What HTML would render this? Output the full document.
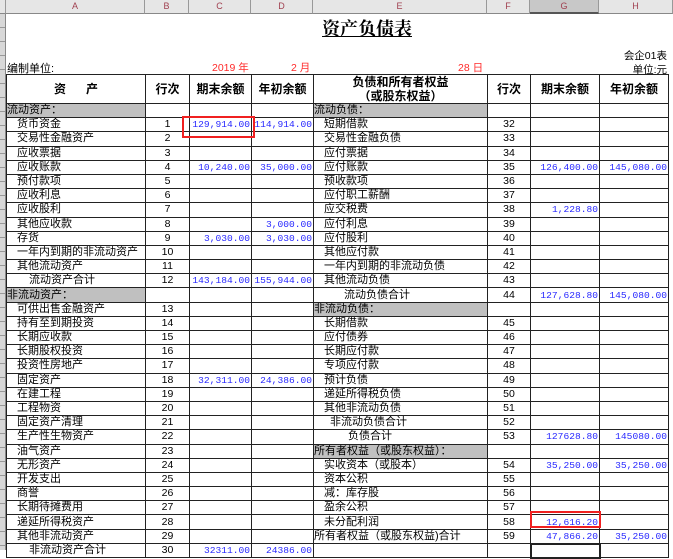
<!DOCTYPE html>
<html><head><meta charset="utf-8">
<style>
*{margin:0;padding:0;box-sizing:border-box}
body{width:673px;height:550px;overflow:hidden;background:#fff;position:relative;font-family:"Liberation Sans","Noto Sans CJK SC",sans-serif;font-size:11px;color:#000}
.ch{position:absolute;top:0;height:14px;background:#e6e6e6;border-right:1px solid #999;border-bottom:1px solid #888;color:#a04050;font-size:9px;text-align:center;line-height:13px;font-family:"Liberation Sans",sans-serif}
.gut{position:absolute;left:0;top:14px;width:6px;height:536px;background:#d8d8d8;border-right:1px solid #888;
 background-image:repeating-linear-gradient(to bottom,transparent 0,transparent 13px,#999 13px,#999 14px)}
.abs{position:absolute;white-space:nowrap}
.red{color:#ff2a2a}
table{position:absolute;left:6px;top:74px;border-collapse:collapse;table-layout:fixed;width:662px}
td{border:1px solid #222;height:14.2px;padding:0;line-height:13px;white-space:nowrap;overflow:hidden;font-size:11px}
tr.h td{height:29px;text-align:center;font-size:12px;font-weight:bold;line-height:14px}
td.n{text-align:center;font-family:"Liberation Sans",sans-serif;font-size:10.5px}
td.v{text-align:right;color:#2828ff;font-family:"Liberation Mono",monospace;font-size:9.6px;padding-right:1px}
td.g{background:#c0c0c0}
.i1{padding-left:10px}.i2{padding-left:22px}.i3{padding-left:16px}.i4{padding-left:30px}
.box{position:absolute;border:2px solid #f02020}
</style></head><body>
<div class="ch" style="left:0;width:6px"></div>
<div class="ch" style="left:6px;width:139px">A</div>
<div class="ch" style="left:145px;width:44px">B</div>
<div class="ch" style="left:189px;width:62px">C</div>
<div class="ch" style="left:251px;width:62px">D</div>
<div class="ch" style="left:313px;width:174px">E</div>
<div class="ch" style="left:487px;width:43px">F</div>
<div class="ch" style="left:530px;width:69px;background:#c8c8c8;border-bottom:2px solid #555">G</div>
<div class="ch" style="left:599px;width:74px">H</div>
<div class="gut"></div>

<div class="abs" style="left:322px;top:15px;font-size:18px;font-family:'Liberation Serif','Noto Serif CJK SC',serif;font-weight:bold;text-decoration:underline;letter-spacing:0px">资产负债表</div>
<div class="abs" style="right:6px;top:48px;font-size:10.5px">会企01表</div>
<div class="abs" style="right:6px;top:62px;font-size:10.5px">单位:元</div>
<div class="abs" style="left:7px;top:60px;font-size:11px">编制单位:</div>
<div class="abs red" style="left:212px;top:60px;font-size:10.5px">2019 年</div>
<div class="abs red" style="left:291px;top:60px;font-size:10.5px">2 月</div>
<div class="abs red" style="left:458px;top:60px;font-size:10.5px">28 日</div>

<table>
<colgroup><col style="width:139px"><col style="width:44px"><col style="width:62px"><col style="width:62px"><col style="width:174px"><col style="width:43px"><col style="width:69px"><col style="width:69px"></colgroup>
<tr class="h"><td>资&nbsp;&nbsp;&nbsp;&nbsp;&nbsp;&nbsp;产</td><td>行次</td><td>期末余额</td><td>年初余额</td><td>负债和所有者权益<br>（或股东权益）</td><td>行次</td><td>期末余额</td><td>年初余额</td></tr>
<tr><td class="g">流动资产：</td><td></td><td></td><td></td><td class="g">流动负债：</td><td></td><td></td><td></td></tr>
<tr><td class="i1">货币资金</td><td class="n">1</td><td class="v">129,914.00</td><td class="v">114,914.00</td><td class="i1">短期借款</td><td class="n">32</td><td></td><td></td></tr>
<tr><td class="i1">交易性金融资产</td><td class="n">2</td><td></td><td></td><td class="i1">交易性金融负债</td><td class="n">33</td><td></td><td></td></tr>
<tr><td class="i1">应收票据</td><td class="n">3</td><td></td><td></td><td class="i1">应付票据</td><td class="n">34</td><td></td><td></td></tr>
<tr><td class="i1">应收账款</td><td class="n">4</td><td class="v">10,240.00</td><td class="v">35,000.00</td><td class="i1">应付账款</td><td class="n">35</td><td class="v">126,400.00</td><td class="v">145,080.00</td></tr>
<tr><td class="i1">预付款项</td><td class="n">5</td><td></td><td></td><td class="i1">预收款项</td><td class="n">36</td><td></td><td></td></tr>
<tr><td class="i1">应收利息</td><td class="n">6</td><td></td><td></td><td class="i1">应付职工薪酬</td><td class="n">37</td><td></td><td></td></tr>
<tr><td class="i1">应收股利</td><td class="n">7</td><td></td><td></td><td class="i1">应交税费</td><td class="n">38</td><td class="v">1,228.80</td><td></td></tr>
<tr><td class="i1">其他应收款</td><td class="n">8</td><td></td><td class="v">3,000.00</td><td class="i1">应付利息</td><td class="n">39</td><td></td><td></td></tr>
<tr><td class="i1">存货</td><td class="n">9</td><td class="v">3,030.00</td><td class="v">3,030.00</td><td class="i1">应付股利</td><td class="n">40</td><td></td><td></td></tr>
<tr><td class="i1">一年内到期的非流动资产</td><td class="n">10</td><td></td><td></td><td class="i1">其他应付款</td><td class="n">41</td><td></td><td></td></tr>
<tr><td class="i1">其他流动资产</td><td class="n">11</td><td></td><td></td><td class="i1">一年内到期的非流动负债</td><td class="n">42</td><td></td><td></td></tr>
<tr><td class="i2">流动资产合计</td><td class="n">12</td><td class="v">143,184.00</td><td class="v">155,944.00</td><td class="i1">其他流动负债</td><td class="n">43</td><td></td><td></td></tr>
<tr><td class="g">非流动资产：</td><td></td><td></td><td></td><td class="i4">流动负债合计</td><td class="n">44</td><td class="v">127,628.80</td><td class="v">145,080.00</td></tr>
<tr><td class="i1">可供出售金融资产</td><td class="n">13</td><td></td><td></td><td class="g">非流动负债：</td><td></td><td></td><td></td></tr>
<tr><td class="i1">持有至到期投资</td><td class="n">14</td><td></td><td></td><td class="i1">长期借款</td><td class="n">45</td><td></td><td></td></tr>
<tr><td class="i1">长期应收款</td><td class="n">15</td><td></td><td></td><td class="i1">应付债券</td><td class="n">46</td><td></td><td></td></tr>
<tr><td class="i1">长期股权投资</td><td class="n">16</td><td></td><td></td><td class="i1">长期应付款</td><td class="n">47</td><td></td><td></td></tr>
<tr><td class="i1">投资性房地产</td><td class="n">17</td><td></td><td></td><td class="i1">专项应付款</td><td class="n">48</td><td></td><td></td></tr>
<tr><td class="i1">固定资产</td><td class="n">18</td><td class="v">32,311.00</td><td class="v">24,386.00</td><td class="i1">预计负债</td><td class="n">49</td><td></td><td></td></tr>
<tr><td class="i1">在建工程</td><td class="n">19</td><td></td><td></td><td class="i1">递延所得税负债</td><td class="n">50</td><td></td><td></td></tr>
<tr><td class="i1">工程物资</td><td class="n">20</td><td></td><td></td><td class="i1">其他非流动负债</td><td class="n">51</td><td></td><td></td></tr>
<tr><td class="i1">固定资产清理</td><td class="n">21</td><td></td><td></td><td class="i3">非流动负债合计</td><td class="n">52</td><td></td><td></td></tr>
<tr><td class="i1">生产性生物资产</td><td class="n">22</td><td></td><td></td><td style="padding-left:34px">负债合计</td><td class="n">53</td><td class="v">127628.80</td><td class="v">145080.00</td></tr>
<tr><td class="i1">油气资产</td><td class="n">23</td><td></td><td></td><td class="g">所有者权益（或股东权益）：</td><td></td><td></td><td></td></tr>
<tr><td class="i1">无形资产</td><td class="n">24</td><td></td><td></td><td class="i1">实收资本（或股本）</td><td class="n">54</td><td class="v">35,250.00</td><td class="v">35,250.00</td></tr>
<tr><td class="i1">开发支出</td><td class="n">25</td><td></td><td></td><td class="i1">资本公积</td><td class="n">55</td><td></td><td></td></tr>
<tr><td class="i1">商誉</td><td class="n">26</td><td></td><td></td><td class="i1">减：库存股</td><td class="n">56</td><td></td><td></td></tr>
<tr><td class="i1">长期待摊费用</td><td class="n">27</td><td></td><td></td><td class="i1">盈余公积</td><td class="n">57</td><td></td><td></td></tr>
<tr><td class="i1">递延所得税资产</td><td class="n">28</td><td></td><td></td><td class="i1">未分配利润</td><td class="n">58</td><td class="v">12,616.20</td><td></td></tr>
<tr><td class="i1">其他非流动资产</td><td class="n">29</td><td></td><td></td><td>所有者权益（或股东权益)合计</td><td class="n">59</td><td class="v">47,866.20</td><td class="v">35,250.00</td></tr>
<tr><td class="i2">非流动资产合计</td><td class="n">30</td><td class="v">32311.00</td><td class="v">24386.00</td><td></td><td></td><td style="border:2px solid #222"></td><td></td></tr>
</table>
<div class="box" style="left:182px;top:116px;width:73px;height:22px"></div>
<div class="box" style="left:530px;top:511px;width:71px;height:17px"></div>
</body></html>
